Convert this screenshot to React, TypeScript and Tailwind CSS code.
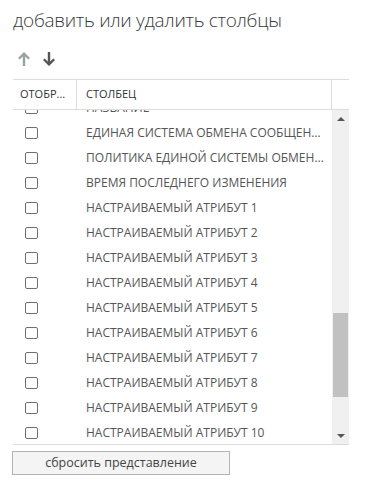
import React from 'react'

const rows = [
  'НАЗВАНИЕ',
  'ЕДИНАЯ СИСТЕМА ОБМЕНА СООБЩЕНИЯМИ',
  'ПОЛИТИКА ЕДИНОЙ СИСТЕМЫ ОБМЕНА СООБЩЕНИЯМИ',
  'ВРЕМЯ ПОСЛЕДНЕГО ИЗМЕНЕНИЯ',
  'НАСТРАИВАЕМЫЙ АТРИБУТ 1',
  'НАСТРАИВАЕМЫЙ АТРИБУТ 2',
  'НАСТРАИВАЕМЫЙ АТРИБУТ 3',
  'НАСТРАИВАЕМЫЙ АТРИБУТ 4',
  'НАСТРАИВАЕМЫЙ АТРИБУТ 5',
  'НАСТРАИВАЕМЫЙ АТРИБУТ 6',
  'НАСТРАИВАЕМЫЙ АТРИБУТ 7',
  'НАСТРАИВАЕМЫЙ АТРИБУТ 8',
  'НАСТРАИВАЕМЫЙ АТРИБУТ 9',
  'НАСТРАИВАЕМЫЙ АТРИБУТ 10',
  'НАСТРАИВАЕМЫЙ АТРИБУТ 11',
]

const Arrow = ({ up, color }: { up?: boolean; color: string }) => (
  <svg width="12" height="14" viewBox="0 0 12 14" className={up ? '' : 'rotate-180'}>
    <path d="M6 0 L12 6 L10.4 7.6 L7.2 4.4 L7.2 14 L4.8 14 L4.8 4.4 L1.6 7.6 L0 6 Z" fill={color} />
  </svg>
)

const Row = ({ label }: { label: string }) => (
  <div className="flex items-center h-[25px] shrink-0">
    <div className="w-[64px] flex items-center pl-[12px]">
      <span className="block w-[13px] h-[12px] border border-[#6f6f6f] rounded-[2px] bg-white" />
    </div>
    <div className="flex-1 min-w-0 pl-[9px] pr-[8px] truncate text-[12px] leading-[25px] text-[#555]">{label}</div>
  </div>
)

const App: React.FC = () => {
  return (
    <div
      className="w-[370px] h-[495px] bg-white px-[13px] pt-[6px] overflow-hidden"
      style={{ fontFamily: '"Open Sans", "Liberation Sans", sans-serif' }}
    >
      <h1 className="text-[19px] font-light text-[#3a3a3a] leading-[28px] tracking-[-0.3px]">
        добавить или удалить столбцы
      </h1>
      <div className="flex items-center gap-[13px] pl-[5px] mt-[17px] h-[16px]">
        <Arrow up color="#95a3a3" />
        <Arrow color="#555" />
      </div>
      <div className="mt-[12px] w-[336px]">
        <div className="flex h-[31px] border-t border-b border-[#dcdcdc] text-[11px] text-[#333]">
          <div className="w-[64px] flex items-center pl-[7px] border-r border-[#dcdcdc]">ОТОБР...</div>
          <div className="flex-1 flex items-center pl-[9px] border-r border-[#dcdcdc]">СТОЛБЕЦ</div>
          <div className="w-[17px]" />
        </div>
        <div className="flex h-[335px] border-b border-[#dcdcdc]">
          <div className="flex-1 min-w-0 overflow-hidden">
            <div className="flex flex-col -mt-[15px]">
              {rows.map((r) => (
                <Row key={r} label={r} />
              ))}
            </div>
          </div>
          <div className="w-[17px] bg-[#f0f0f0] flex flex-col items-center">
            <div className="h-[17px] flex items-center justify-center">
              <span className="block w-0 h-0 border-l-[4px] border-r-[4px] border-b-[4px] border-l-transparent border-r-transparent border-b-[#555]" />
            </div>
            <div className="flex-1 w-full px-[1px] flex flex-col">
              <div className="h-[186px]" />
              <div className="h-[84px] bg-[#c1c1c1]" />
            </div>
            <div className="h-[17px] flex items-center justify-center">
              <span className="block w-0 h-0 border-l-[4px] border-r-[4px] border-t-[4px] border-l-transparent border-r-transparent border-t-[#555]" />
            </div>
          </div>
        </div>
      </div>
      <button className="mt-[6px] -ml-[1px] w-[218px] h-[24px] bg-[#f4f4f4] border border-[#b4b4b4] text-[12.5px] text-[#444] leading-[22px]">
        сбросить представление
      </button>
    </div>
  )
}

export default App
